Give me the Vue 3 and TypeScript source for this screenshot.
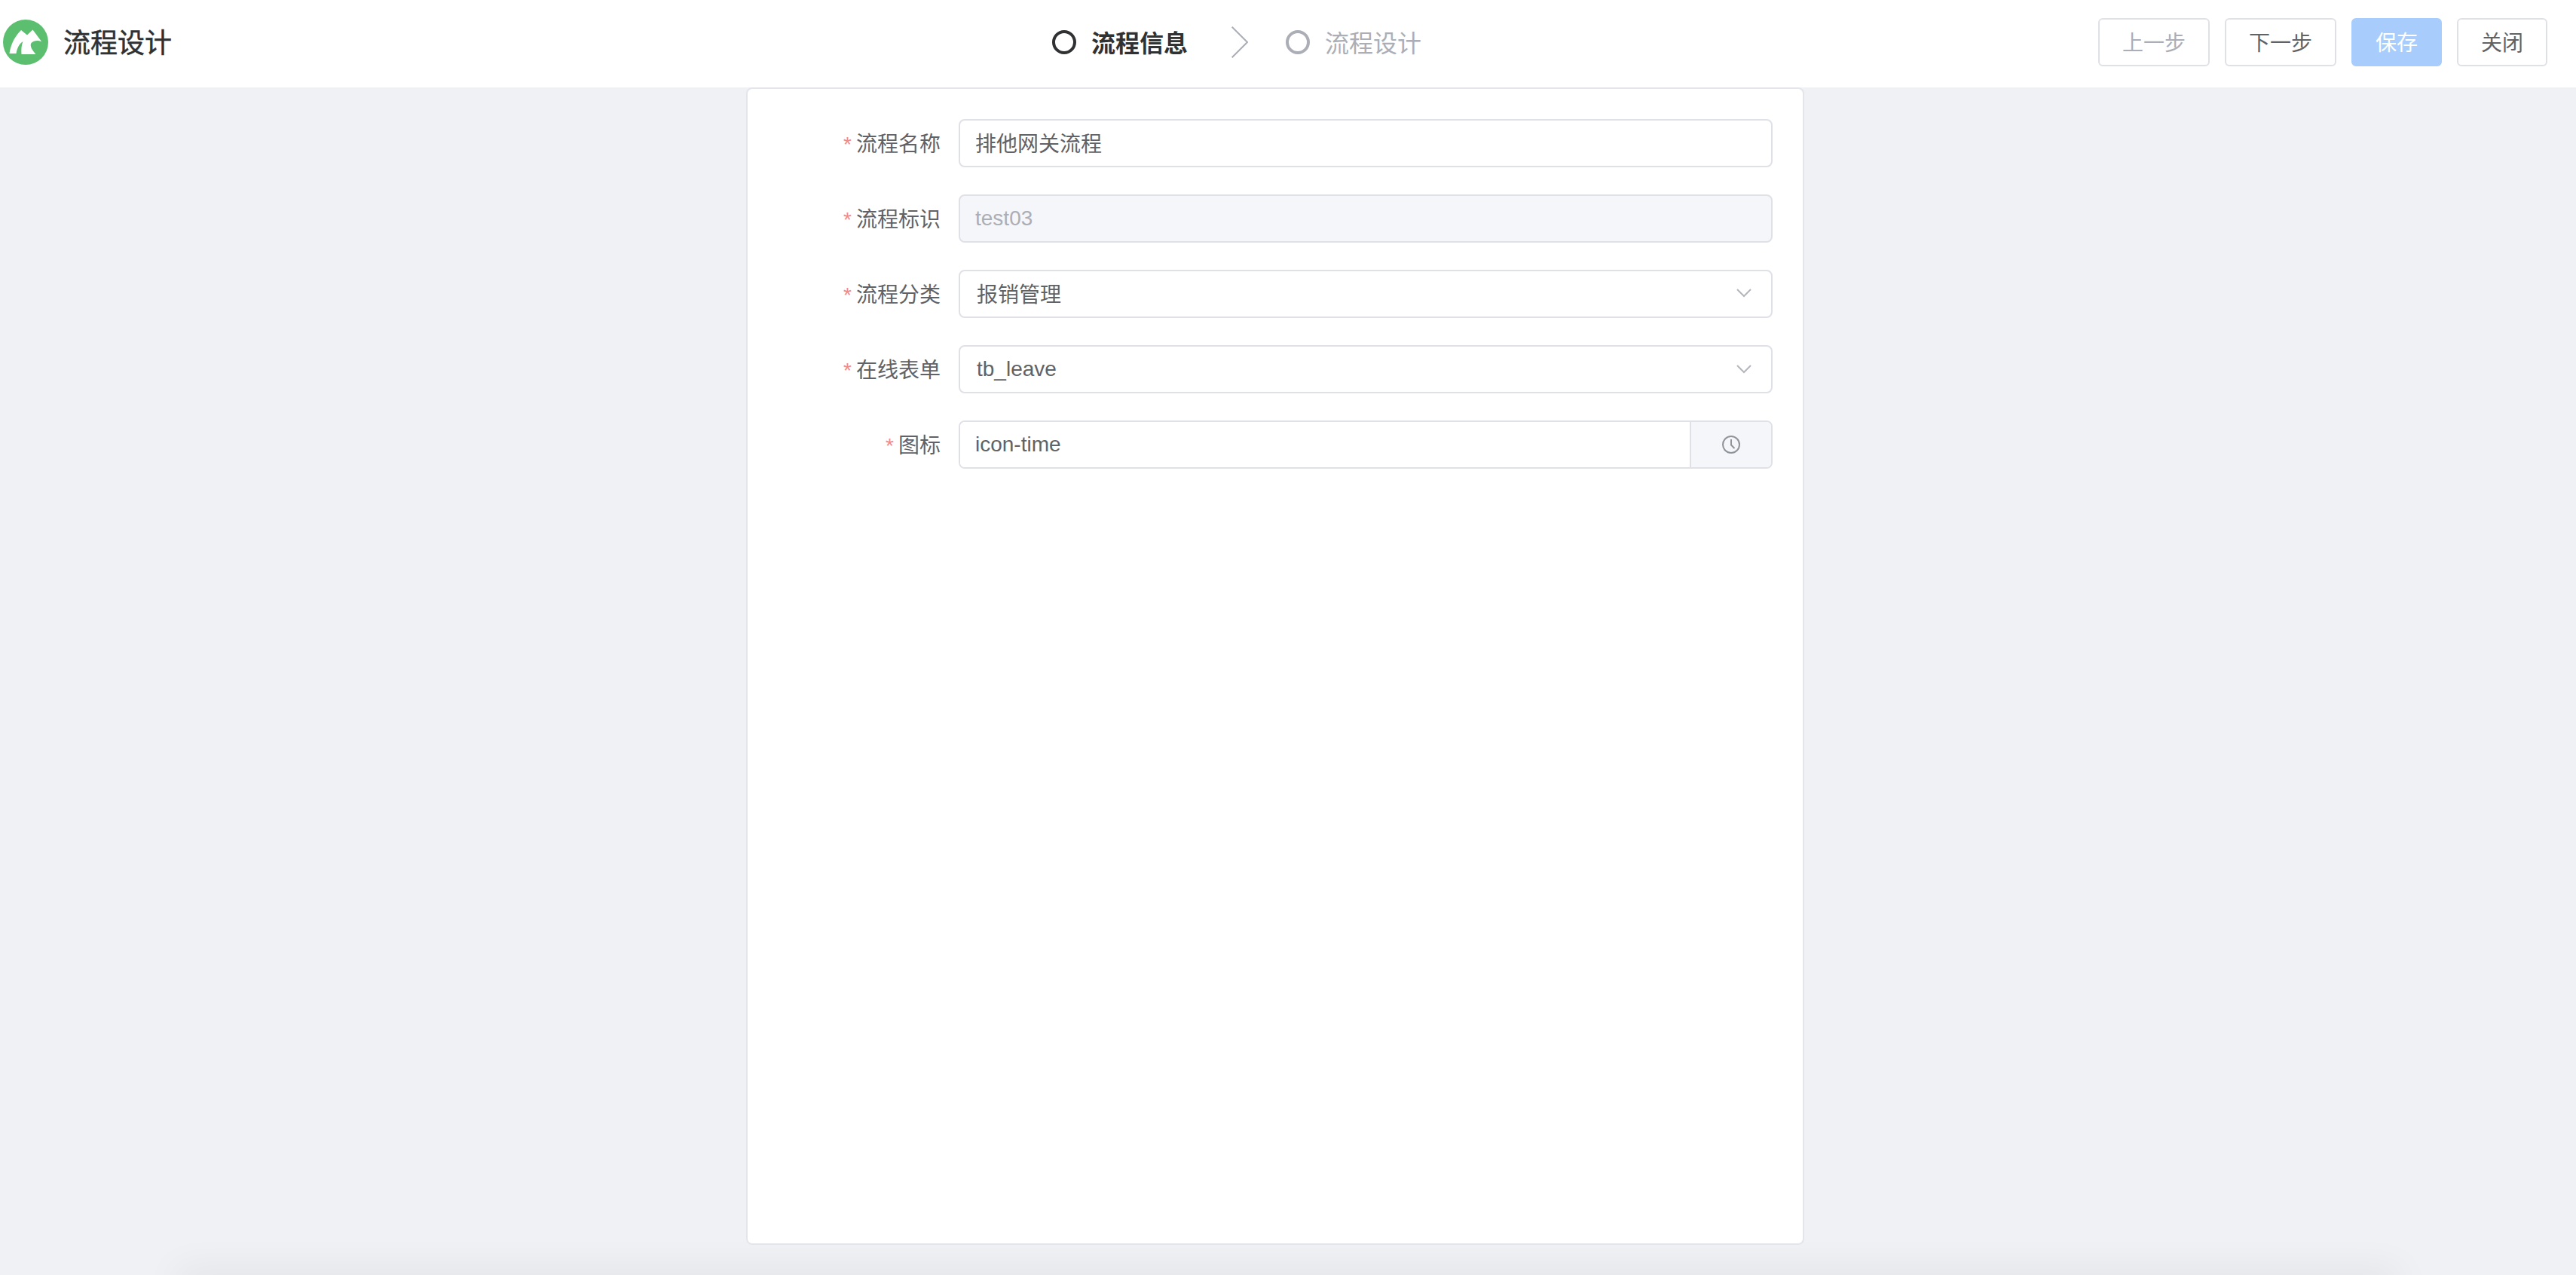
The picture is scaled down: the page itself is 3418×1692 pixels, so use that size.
<script setup lang="ts">
import { reactive } from "vue"

interface Step {
  title: string
  active: boolean
}

const steps: Step[] = [
  { title: "流程信息", active: true },
  { title: "流程设计", active: false },
]

const form = reactive({
  name: "排他网关流程",
  key: "test03",
  category: "报销管理",
  table: "tb_leave",
  icon: "icon-time",
})
</script>

<template>
  <div class="page">
    <header class="top-bar">
      <div class="brand">
        <svg class="logo" viewBox="0 0 60 60" aria-hidden="true">
          <circle cx="30" cy="30" r="30" fill="#5cbf70" />
          <path
            fill="#fff"
            d="M8.5 45 C10 35 14 24 24 14 L32 20.5 L39.5 13.5 L51 29 C47 27.5 41 27 37.5 31 C35 35 39 41 43.5 46 L24.5 46 C24 39 24.5 34 26.5 29 C21.5 32 18.5 38 17.5 45 Z"
          />
        </svg>
        <span class="brand-title">流程设计</span>
      </div>

      <div class="steps">
        <template v-for="(step, i) in steps" :key="step.title">
          <svg v-if="i > 0" class="step-arrow" viewBox="0 0 22 42" aria-hidden="true">
            <path d="M0.7 0.7 L21 21 L0.7 41.3" fill="none" stroke="#abaeb6" stroke-width="2" />
          </svg>
          <div class="step" :class="{ active: step.active }">
            <i class="step-dot"></i>
            <span>{{ step.title }}</span>
          </div>
        </template>
      </div>

      <div class="actions">
        <button class="btn" disabled>上一步</button>
        <button class="btn">下一步</button>
        <button class="btn primary" disabled>保存</button>
        <button class="btn">关闭</button>
      </div>
    </header>

    <main class="content">
      <form class="card" @submit.prevent>
        <div class="row">
          <label class="label">流程名称</label>
          <input v-model="form.name" class="field cjk" />
        </div>
        <div class="row">
          <label class="label">流程标识</label>
          <input v-model="form.key" class="field" disabled />
        </div>
        <div class="row">
          <label class="label">流程分类</label>
          <div class="field select cjk">
            <span>{{ form.category }}</span>
            <svg class="chevron" viewBox="0 0 20 12" aria-hidden="true">
              <path d="M1 1 L10 10 L19 1" fill="none" stroke="#b4b6bd" stroke-width="2" />
            </svg>
          </div>
        </div>
        <div class="row">
          <label class="label">在线表单</label>
          <div class="field select">
            <span>{{ form.table }}</span>
            <svg class="chevron" viewBox="0 0 20 12" aria-hidden="true">
              <path d="M1 1 L10 10 L19 1" fill="none" stroke="#b4b6bd" stroke-width="2" />
            </svg>
          </div>
        </div>
        <div class="row">
          <label class="label">图标</label>
          <div class="group">
            <input v-model="form.icon" class="group-input" />
            <div class="append">
              <svg class="clock" viewBox="0 0 24 24" aria-hidden="true">
                <circle cx="12" cy="12" r="11" fill="none" stroke="#909399" stroke-width="2" />
                <path d="M12 5 V12.5 L16.5 17" fill="none" stroke="#909399" stroke-width="2" />
              </svg>
            </div>
          </div>
        </div>
      </form>
    </main>

    <div class="bottom-shade"></div>
  </div>
</template>

<style>
html,
body {
  margin: 0;
  background: #f0f1f5;
}
</style>

<style scoped>
.page {
  position: relative;
  height: 100vh;
  overflow: hidden;
  display: flex;
  flex-direction: column;
  background: #f0f1f5;
  color: #606266;
  font-family: "Liberation Sans", "Noto Sans CJK SC", sans-serif;
  font-size: 28px;
}

.top-bar {
  flex: none;
  height: 116px;
  box-sizing: border-box;
  display: flex;
  align-items: center;
  padding: 0 38px 4px 4px;
  background: #fff;
}

.brand {
  width: 1392px;
  display: flex;
  align-items: center;
  gap: 20px;
}

.logo {
  width: 60px;
  height: 60px;
}

.brand-title {
  margin-bottom: 4px;
  font-size: 36px;
  color: #303133;
  -webkit-text-stroke: 0.5px #303133;
}

.steps {
  display: flex;
  align-items: center;
}

.step {
  display: flex;
  align-items: center;
  gap: 20px;
  font-size: 32px;
  color: #abaeb6;
}

.step span {
  margin-bottom: 3px;
}

.step.active {
  color: #303133;
  font-weight: 700;
}

.step-dot {
  width: 32px;
  height: 32px;
  box-sizing: border-box;
  border: 4px solid currentColor;
  border-radius: 50%;
}

.step-arrow {
  width: 22px;
  height: 42px;
  margin: 0 50px 0 58px;
}

.actions {
  margin-left: auto;
  display: flex;
  gap: 20px;
}

.btn {
  height: 64px;
  padding: 0 30px 2px;
  border: 2px solid #e0e1e7;
  border-radius: 6px;
  background: #fff;
  color: #606266;
  font: inherit;
  cursor: pointer;
}

.btn:disabled {
  color: #abaeb6;
  cursor: not-allowed;
}

.btn.primary {
  border-color: #a8cdfd;
  background: #a8cdfd;
  color: #fff;
}

.content {
  flex: 1;
  min-height: 0;
  position: relative;
  z-index: 1;
  display: flex;
  justify-content: center;
  padding: 0 34px 40px 0;
}

.card {
  width: 1404px;
  box-sizing: border-box;
  padding: 40px;
  display: flex;
  flex-direction: column;
  gap: 36px;
  background: #fff;
  border: 2px solid #e4e5ea;
  border-radius: 8px;
}

.row {
  display: flex;
  align-items: center;
}

.label {
  flex: none;
  width: 240px;
  box-sizing: border-box;
  margin-bottom: 2px;
  padding-right: 24px;
  text-align: right;
}

.label::before {
  content: "*";
  margin-right: 6px;
  color: #f08a8a;
}

.field {
  flex: 1;
  min-width: 0;
  height: 64px;
  box-sizing: border-box;
  padding: 0 20px;
  border: 2px solid #e0e1e7;
  border-radius: 8px;
  background: #fff;
  color: #606266;
  font: inherit;
  outline: none;
}

.field.cjk {
  padding-bottom: 2px;
}

.field:disabled {
  background: #f5f6fa;
  color: #abaeb6;
}

.select {
  display: flex;
  align-items: center;
  justify-content: space-between;
  padding: 0 26px 0 22px;
}

.chevron {
  width: 20px;
  height: 12px;
}

.group {
  flex: 1;
  min-width: 0;
  height: 64px;
  box-sizing: border-box;
  display: flex;
  border: 2px solid #e0e1e7;
  border-radius: 8px;
  overflow: hidden;
}

.group-input {
  flex: 1;
  min-width: 0;
  padding: 0 20px;
  border: 0;
  color: #606266;
  font: inherit;
  outline: none;
}

.append {
  flex: none;
  width: 106px;
  display: flex;
  align-items: center;
  justify-content: center;
  border-left: 2px solid #e0e1e7;
  background: #f5f6fa;
}

.clock {
  width: 24px;
  height: 24px;
}

.bottom-shade {
  position: absolute;
  top: 100%;
  left: 240px;
  right: 240px;
  height: 20px;
  box-shadow: 0 0 50px 6px rgba(0, 0, 0, 0.07);
}
</style>
